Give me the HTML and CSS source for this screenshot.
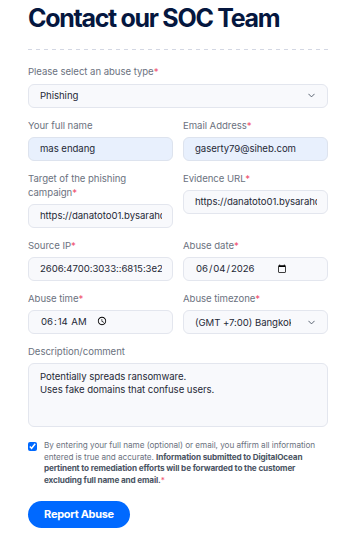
FILE: index.html
```html
<!DOCTYPE html>
<html lang="en">
<head>
<meta charset="utf-8">
<title>Contact our SOC Team</title>
<link rel="stylesheet" href="styles.css">
</head>
<body>
<main class="page">
  <h1 class="title">Contact our SOC Team</h1>
  <hr class="divider">
  <form class="form">
    <div class="field full">
      <label class="label">Please select an abuse type<span class="req">*</span></label>
      <div class="select-wrap">
        <select class="control select"><option>Phishing</option></select>
        <svg class="chev" viewBox="0 0 10 6" width="7" height="5"><path d="M1 1l4 4 4-4" fill="none" stroke="#4b5563" stroke-width="1.3" stroke-linecap="round" stroke-linejoin="round"/></svg>
      </div>
    </div>
    <div class="field">
      <label class="label">Your full name</label>
      <input class="control autofill" type="text" value="mas endang">
    </div>
    <div class="field">
      <label class="label">Email Address<span class="req">*</span></label>
      <input class="control autofill" type="text" value="gaserty79@siheb.com">
    </div>
    <div class="field">
      <label class="label">Target of the phishing campaign<span class="req">*</span></label>
      <input class="control" type="text" value="https://danatoto01.bysarahdesign.com">
    </div>
    <div class="field">
      <label class="label">Evidence URL<span class="req">*</span></label>
      <input class="control" type="text" value="https://danatoto01.bysarahdesign.com">
    </div>
    <div class="field">
      <label class="label">Source IP<span class="req">*</span></label>
      <input class="control" type="text" value="2606:4700:3033::6815:3e2c">
    </div>
    <div class="field">
      <label class="label">Abuse date<span class="req">*</span></label>
      <input class="control dt" type="date" value="2026-06-04">
    </div>
    <div class="field">
      <label class="label">Abuse time<span class="req">*</span></label>
      <input class="control dt" type="time" value="06:14">
    </div>
    <div class="field">
      <label class="label">Abuse timezone<span class="req">*</span></label>
      <div class="select-wrap">
        <select class="control select tz"><option>(GMT +7:00) Bangkok, Hanoi, Jakarta</option></select>
        <svg class="chev" viewBox="0 0 10 6" width="7" height="5"><path d="M1 1l4 4 4-4" fill="none" stroke="#4b5563" stroke-width="1.3" stroke-linecap="round" stroke-linejoin="round"/></svg>
      </div>
    </div>
    <div class="field full">
      <label class="label">Description/comment</label>
      <textarea class="control area">Potentially spreads ransomware.
Uses fake domains that confuse users.</textarea>
    </div>
    <div class="consent full">
      <input class="check" type="checkbox" checked>
      <p class="consent-text">By entering your full name (optional) or email, you affirm all information entered is true and accurate. <strong>Information submitted to DigitalOcean pertinent to remediation efforts will be forwarded to the customer excluding full name and email.</strong><span class="req">*</span></p>
    </div>
    <div class="full">
      <button class="btn" type="button">Report Abuse</button>
    </div>
  </form>
</main>
</body>
</html>
```

FILE: styles.css
```css
* { box-sizing: border-box; }
html, body { margin: 0; padding: 0; background: #fff; }
body { font-family: Inter, "Noto Sans", sans-serif; color: #1f2937; }

.page { width: 354px; padding: 3px 26px 20px 28px; }

.title {
  margin: 0;
  font-size: 25px;
  line-height: 30px;
  font-weight: 700;
  letter-spacing: -1.3px;
  color: #05173f;
}

.divider {
  margin: 16px 0 0;
  height: 1px;
  border: 0;
  background-image: linear-gradient(to right, #d3d7e3 0 4px, transparent 4px 8px);
  background-size: 8px 1px;
  background-repeat: repeat-x;
}

.form {
  display: grid;
  grid-template-columns: 145px 145px;
  column-gap: 10px;
  row-gap: 11px;
  margin-top: 15px;
  align-items: start;
}

.full { grid-column: 1 / -1; }

.field { display: flex; flex-direction: column; }

.label {
  font-size: 9.6px;
  line-height: 14px;
  letter-spacing: -0.05px;
  color: #6b7280;
  margin-bottom: 4px;
}

.req { color: #f0506e; }

.control {
  width: 100%;
  height: 24px;
  border: 1px solid #e3e6ee;
  border-radius: 6px;
  background: #f8f9fc;
  font-family: Inter, "Noto Sans", sans-serif;
  font-size: 9.6px;
  letter-spacing: -0.05px;
  color: #1f2937;
  padding: 0 10px 0 11px;
  outline: none;
  margin: 0;
}

.autofill { background: #e8f0fd; border-color: #dde3ee; }

.dt::-webkit-datetime-edit { flex: 0 0 auto; }
.dt::-webkit-calendar-picker-indicator { margin-left: 4px; }

.select-wrap { position: relative; }
.select { appearance: none; -webkit-appearance: none; padding-right: 36px; }
.chev { position: absolute; right: 13px; top: 10px; pointer-events: none; }

.area {
  height: 64px;
  padding: 6px 11px;
  line-height: 13px;
  resize: none;
}

.consent { display: flex; gap: 7px; align-items: flex-start; margin-top: 2px; }
.check {
  width: 9px; height: 9px; margin: 2px 0 0 0;
  accent-color: #0069ff; flex: none;
}
.consent-text {
  margin: 0;
  font-size: 8.2px;
  line-height: 11.7px;
  letter-spacing: -0.05px;
  color: #6b7280;
}
.consent-text strong { color: #4b5563; font-weight: 700; letter-spacing: -0.15px; }

.btn {
  margin-top: 3px;
  height: 27px;
  width: 102px;
  border: 0;
  border-radius: 14px;
  background: #0069ff;
  color: #fff;
  font-family: Inter, "Noto Sans", sans-serif;
  font-weight: 700;
  font-size: 11px;
  letter-spacing: -0.3px;
  padding: 0;
}
```
